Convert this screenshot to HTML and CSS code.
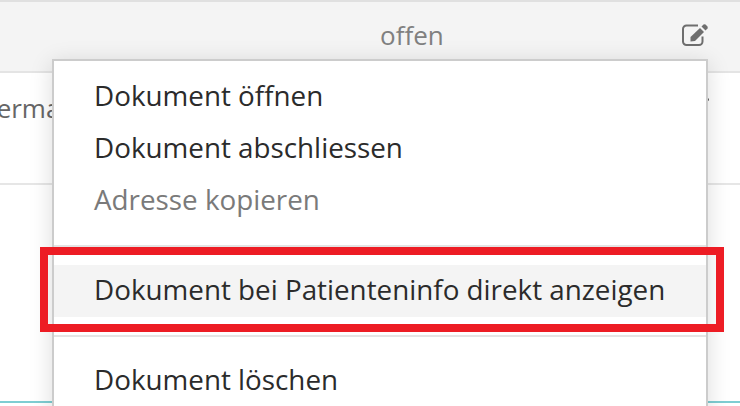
FILE: index.html
```html
<!DOCTYPE html>
<html lang="de">
<head>
<meta charset="utf-8">
<title>Dokument</title>
<link rel="stylesheet" href="styles.css">
</head>
<body>
<div class="page">
  <div class="head">
    <span class="status">offen</span>
    <svg class="edit" width="26" height="22" viewBox="0 0 26 22" aria-hidden="true">
      <path d="M16 1.500H4.500A3.500 3.500 0 0 0 1 5V17.500A3.500 3.500 0 0 0 4.500 21H17A3.500 3.500 0 0 0 20.500 17.500V12.500" fill="none" stroke="#6e6e6e" stroke-width="2"/>
      <path d="M8.500 13L18 4L22 8L13 17L8.500 17.500Z" fill="#6e6e6e"/>
      <path d="M19.500 2.500L21.500 0.500Q22.500 0 23.500 0.500L25.500 2.500Q26 3.500 25.500 4.500L23.500 6.500Z" fill="#6e6e6e"/>
    </svg>
  </div>
  <div class="row"><span class="cell">Perma</span><span class="dot"></span></div>
  <div class="rest"></div>
  <div class="menu">
    <div class="item">Dokument öffnen</div>
    <div class="item">Dokument abschliessen</div>
    <div class="item muted">Adresse kopieren</div>
    <div class="divider"></div>
    <div class="item hover">Dokument bei Patienteninfo direkt anzeigen</div>
    <div class="divider"></div>
    <div class="item">Dokument löschen</div>
  </div>
  <div class="mark"></div>
</div>
</body>
</html>
```
FILE: styles.css
```css
* { box-sizing: border-box; }
html, body { margin: 0; padding: 0; }
body { background: #fff; font-family: "Open Sans", Lato, sans-serif; overflow: hidden; }
.page { position: relative; width: 740px; height: 406px; overflow: hidden; display: flex; flex-direction: column; }
.head { height: 73px; flex: none; background: #f4f4f4; border-top: 2px solid #e0e0e0; border-bottom: 2px solid #e4e4e4; display: flex; align-items: center; padding-left: 380px; }
.status { font-size: 26px; color: #808080; line-height: 1; margin-top: -4px; }
.edit { margin: -3px 32px 0 auto; }
.row { height: 112px; flex: none; border-bottom: 2px solid #e6e6e6; padding-top: 20px; overflow: hidden; white-space: nowrap; display: flex; }
.cell { flex: none; margin-left: -19px; font-size: 26px; color: #666; line-height: 30px; }
.dot { width: 3px; height: 3px; border-radius: 50%; background: #555; margin: 5px 31px 0 auto; }
.rest { height: 218px; flex: none; border-bottom: 2px solid #7ecdd2; }
.menu { position: absolute; left: 52px; top: 59px; width: 656px; height: 360px; background: #fff; border: 2px solid #ccc; border-bottom: 0; box-shadow: 0 4px 22px rgba(0,0,0,.14); padding-top: 10px; }
.item { height: 52px; line-height: 48px; padding-left: 40px; font-size: 27.8px; color: #2b2b2b; white-space: nowrap; }
.muted { color: #7a7a7a; }
.hover { background: #f4f4f4; }
.divider { height: 2px; background: #e4e4e4; margin: 18px 0; }
.mark { position: absolute; left: 40px; top: 247px; width: 684px; height: 85px; border: 8px solid #ed1c24; }
```
